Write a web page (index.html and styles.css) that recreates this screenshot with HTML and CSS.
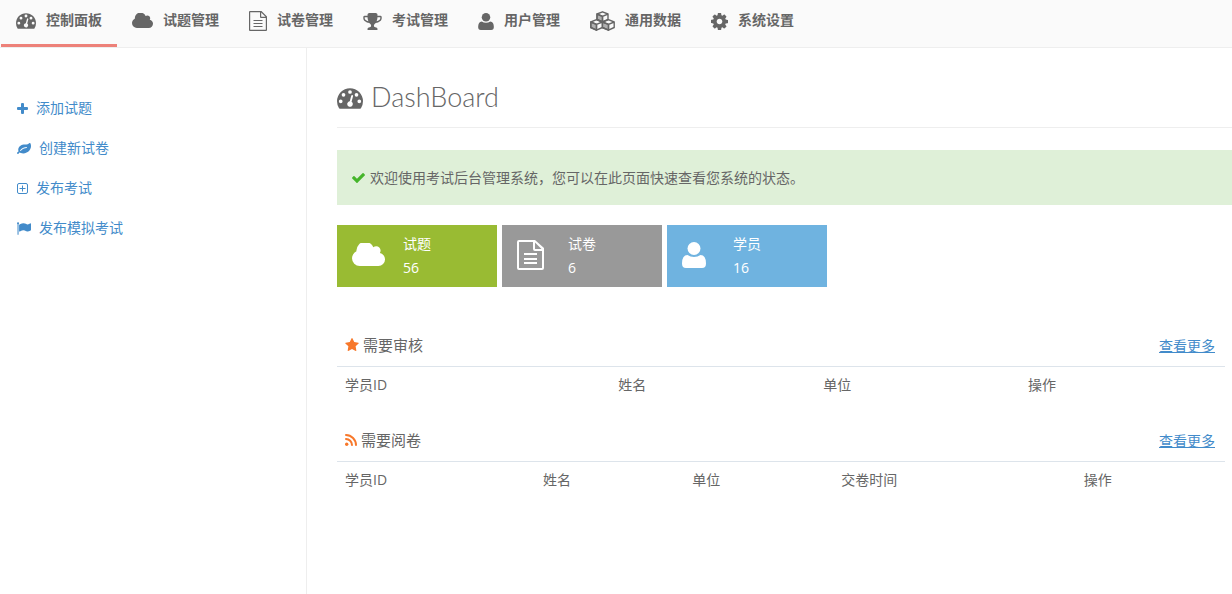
FILE: index.html
```html
<!DOCTYPE html>
<html lang="zh-CN">
<head>
<meta charset="utf-8">
<title>控制面板</title>
<link rel="stylesheet" href="styles.css">
</head>
<body>
<svg class="sprite" aria-hidden="true">
  <symbol id="dashboard" viewBox="0 256 1792 1408"><path fill-rule="evenodd" d="M1792 1152q0 261-141 483-19 29-54 29h-1402q-35 0-54-29-141-221-141-483 0-182 71-348t191-286 286-191 348-71 348 71 286 191 191 286 71 348zM384 1152a128 128 0 1 0-256 0 128 128 0 1 0 256 0zM576 704a128 128 0 1 0-256 0 128 128 0 1 0 256 0zM1024 512a128 128 0 1 0-256 0 128 128 0 1 0 256 0zM1472 704a128 128 0 1 0-256 0 128 128 0 1 0 256 0zM1664 1152a128 128 0 1 0-256 0 128 128 0 1 0 256 0zM1004 1185l101-382q6-26-7.500-48.500t-38.500-29.500-48 6.500-30 39.500l-101 382q-60 5-107 43.500t-63 98.500q-20 77 20 146t117 89 146-20 89-117q16-60-6-117t-72-91z"/></symbol>
  <symbol id="cloud" viewBox="64 256 1920 1280"><path d="M1984 1152q0 159-112.500 271.500t-271.500 112.500h-1088q-185 0-316.500-131.500t-131.500-316.500q0-132 71-241.500t187-163.500q-2-28-2-43 0-212 150-362t362-150q158 0 286.500 88t187.500 230q70-62 166-62 106 0 181 75t75 181q0 75-41 138 129 30 213.500 134.500t84.500 239.500z"/></symbol>
  <symbol id="file" viewBox="0 0 18 20"><path fill-rule="evenodd" d="M1 0H12.500L18 5.500V19a1 1 0 0 1-1 1H1a1 1 0 0 1-1-1V1a1 1 0 0 1 1-1zM1.200 1.200V18.800H16.800V7H12a1 1 0 0 1-1-1V1.200zM12.200 1.500V5.800H16.500zM4.500 9H13.500V10.100H4.500zM4.500 12H13.500V13.100H4.500zM4.500 15H13.500V16.100H4.500z"/></symbol>
  <symbol id="file-large" viewBox="0 0 27 30"><path fill-rule="evenodd" d="M2 0H18L27 8V28a2 2 0 0 1-2 2H2a2 2 0 0 1-2-2V2a2 2 0 0 1 2-2zM2 2V28H25V11H18a2 2 0 0 1-2-2V2zM18 2.500V9H24.500zM7 13H20V15H7zM7 18H20V20H7zM7 22H20V24H7z"/></symbol>
  <symbol id="trophy" viewBox="64 128 1664 1536"><path d="M522 883q-74-162-74-371h-256v96q0 78 94.500 162t235.500 113zm1078-275v-96h-256q0 209-74 371 141-29 235.500-113t94.500-162zm128-128v128q0 71-41.500 143t-112 130-173 97.500-215.500 44.500q-42 54-95 95-38 34-52.500 72.500t-14.500 89.500q0 54 30.500 91t97.500 37q75 0 133.500 45.500t58.500 114.500v64q0 14-9 23t-23 9h-832q-14 0-23-9t-9-23v-64q0-69 58.500-114.500t133.500-45.500q67 0 97.500-37t30.500-91q0-51-14.500-89.500t-52.500-72.500q-53-41-95-95-113-5-215.500-44.500t-173-97.500-112-130-41.500-143v-128q0-40 28-68t68-28h288v-96q0-66 47-113t113-47h576q66 0 113 47t47 113v96h288q40 0 68 28t28 68z"/></symbol>
  <symbol id="user" viewBox="0 0 24 26"><circle cx="12" cy="6.500" r="6.500"/><path d="M5.500 13Q8.300 15 12 15T18.500 13Q24 13.200 24 21.500 24 26 20 26H4Q0 26 0 21.500 0 13.200 5.500 13z"/></symbol>
  <symbol id="cubes" viewBox="0 0 25 20"><g stroke="currentColor" stroke-width="1.400" stroke-linejoin="round"><path fill="none" d="M7 3L12.500 .8 18 3V8.500L12.500 11 7 8.500zM7 3L12.500 5.300 18 3M12.500 5.300V11"/><path fill="none" d="M.8 11L6.500 8.700 12.400 11V16.500L6.500 19.200 .8 16.500zM.8 11L6.500 13.400 12.400 11M6.500 13.400V19.200"/><path fill="none" d="M12.400 11L18.500 8.700 24.200 11V16.500L18.500 19.200 12.400 16.500M12.400 11L18.500 13.400 24.200 11M18.500 13.400V19.200"/><path fill-opacity=".5" d="M7 3L12.500 5.300V11L7 8.500zM.8 11L6.500 13.400V19.200L.8 16.500zM12.400 11L18.500 13.400V19.200L12.400 16.500z"/></g></symbol>
  <symbol id="cog" viewBox="128 128 1536 1536"><path fill-rule="evenodd" d="M1152 896q0-106-75-181t-181-75-181 75-75 181 75 181 181 75 181-75 75-181zm512-109v222q0 12-8 23t-20 13l-185 28q-19 54-39 91 35 50 107 138 10 12 10 25t-9 23q-27 37-99 108t-94 71q-12 0-26-9l-138-108q-44 23-91 38-16 136-29 186-7 28-36 28h-222q-14 0-24.500-8.500t-11.500-21.500l-28-184q-49-16-90-37l-141 107q-10 9-25 9-14 0-25-11-126-114-165-168-7-10-7-23 0-12 8-23 15-21 51-66.500t54-70.500q-27-50-41-99l-183-27q-13-2-21-12.500t-8-23.500v-222q0-12 8-23t19-13l186-28q14-46 39-92-40-57-107-138-10-12-10-24 0-10 9-23 26-36 98.500-107.500t94.500-71.500q13 0 26 10l138 107q44-23 91-38 16-136 29-186 7-28 36-28h222q14 0 24.500 8.500t11.500 21.500l28 184q49 16 90 37l142-107q9-9 24-9 13 0 25 10 129 119 165 170 7 8 7 22 0 12-8 23-15 21-51 66.500t-54 70.500q26 50 41 98l183 28q13 2 21 12.500t8 23.500z"/></symbol>
  <symbol id="plus" viewBox="0 0 11 11"><path d="M5 0H6Q7 0 7 1V4H10Q11 4 11 5V6Q11 7 10 7H7V10Q7 11 6 11H5Q4 11 4 10V7H1Q0 7 0 6V5Q0 4 1 4H4V1Q4 0 5 0z"/></symbol>
  <symbol id="leaf" viewBox="0 128 1792 1408"><path fill-rule="evenodd" d="M1280 704q0-26-19-45t-45-19q-172 0-318 49.500t-259.500 134-235.500 219.500q-19 21-19 45 0 26 19 45t45 19q24 0 45-19 27-24 74-71t67-66q137-124 268.500-176t313.500-52q26 0 45-19t19-45zm512-198q0 95-20 193-46 224-184.500 383t-357.500 268q-214 108-438 108-148 0-286-47-15-5-88-42t-96-37q-16 0-39.500 32t-45 70-52.500 70-60 32q-43 0-63.500-17.500t-45.500-59.500q-2-4-6-11t-5.500-10-3-9.500-1.500-13.500q0-35 31-73.500t68-65.500 68-56 31-48q0-4-14-38t-16-44q-9-51-9-104 0-115 43.500-220t119-184.500 170.500-139 204-95.500q55-18 145-25.500t179.500-9 178.500-6 163.500-24 113.500-56.500l29.500-29.500t29.500-28 27-20 36.500-16 43.500-4.500q39 0 70.500 46t47.500 112 24 124 8 96z"/></symbol>
  <symbol id="plus-box" viewBox="0 0 11 11"><path fill="none" stroke="currentColor" d="M2 .5H9Q10.500 .5 10.500 2V9Q10.500 10.500 9 10.500H2Q.5 10.500 .5 9V2Q.5 .5 2 .5zM5.500 2.500V8.500M2.500 5.500H8.500"/></symbol>
  <symbol id="flag" viewBox="64 128 1728 1536"><path d="M320 256q0 72-64 110v1266q0 13-9.500 22.500t-22.500 9.500h-64q-13 0-22.500-9.500t-9.500-22.500v-1266q-64-38-64-110 0-53 37.500-90.500t90.500-37.500 90.500 37.500 37.500 90.500zm1472 64v763q0 25-12.500 38.500t-39.500 27.500q-215 116-369 116-61 0-123.500-22t-108.500-48-115.500-48-142.500-22q-192 0-464 146-17 9-33 9-26 0-45-19t-19-45v-742q0-32 31-55 21-14 79-43 236-120 421-120 107 0 200 29t219 88q38 19 88 19 54 0 117.500-21t110-47 88-47 54.500-21q26 0 45 19t19 45z"/></symbol>
  <symbol id="check" viewBox="120 330 1552 1192"><path d="M1671 566q0 40-28 68l-724 724-136 136q-28 28-68 28t-68-28l-136-136-362-362q-28-28-28-68t28-68l136-136q28-28 68-28t68 28l294 295 656-657q28-28 68-28t68 28l136 136q28 28 28 68z"/></symbol>
  <symbol id="star" viewBox="64 32 1664 1588"><path d="M1728 647q0 22-26 48l-363 354 86 500q1 7 1 20 0 21-10.500 35.500t-30.500 14.500q-19 0-40-12l-449-236-449 236q-22 12-40 12-21 0-31.500-14.500t-10.500-35.500q0-6 2-20l86-500-364-354q-25-27-25-48 0-37 56-46l502-73 225-455q19-41 49-41t49 41l225 455 502 73q56 9 56 46z"/></symbol>
  <symbol id="rss" viewBox="0 0 12 12"><circle cx="1.700" cy="10.300" r="1.700"/><path fill="none" stroke="currentColor" stroke-width="2" stroke-linecap="round" d="M1 5A6.200 6.200 0 0 1 7 11M1 1A10.200 10.200 0 0 1 11 11"/></symbol>
</svg>

<header class="topbar">
  <nav class="nav">
    <a class="nav-item active" href="#"><svg class="icon w20"><use href="#dashboard"/></svg>控制面板</a>
    <a class="nav-item" href="#"><svg class="icon w21"><use href="#cloud"/></svg>试题管理</a>
    <a class="nav-item" href="#"><svg class="icon w18"><use href="#file"/></svg>试卷管理</a>
    <a class="nav-item" href="#"><svg class="icon w19"><use href="#trophy"/></svg>考试管理</a>
    <a class="nav-item" href="#"><svg class="icon w16"><use href="#user"/></svg>用户管理</a>
    <a class="nav-item" href="#"><svg class="icon w25"><use href="#cubes"/></svg>通用数据</a>
    <a class="nav-item" href="#"><svg class="icon w17"><use href="#cog"/></svg>系统设置</a>
  </nav>
</header>

<div class="layout">
  <aside class="sidebar">
    <a class="side-link" href="#"><svg class="icon w11"><use href="#plus"/></svg>添加试题</a>
    <a class="side-link" href="#"><svg class="icon w14"><use href="#leaf"/></svg>创建新试卷</a>
    <a class="side-link" href="#"><svg class="icon w11"><use href="#plus-box"/></svg>发布考试</a>
    <a class="side-link" href="#"><svg class="icon w14"><use href="#flag"/></svg>发布模拟考试</a>
  </aside>

  <main class="main">
    <h1 class="title"><svg class="icon w26"><use href="#dashboard"/></svg>DashBoard</h1>

    <div class="alert"><svg class="icon w13"><use href="#check"/></svg>欢迎使用考试后台管理系统，您可以在此页面快速查看您系统的状态。</div>

    <div class="tiles">
      <div class="tile green"><span class="tile-icon"><svg class="icon w33"><use href="#cloud"/></svg></span><div><div>试题</div><div>56</div></div></div>
      <div class="tile gray"><span class="tile-icon"><svg class="icon w27"><use href="#file-large"/></svg></span><div><div>试卷</div><div>6</div></div></div>
      <div class="tile blue"><span class="tile-icon"><svg class="icon w24"><use href="#user"/></svg></span><div><div>学员</div><div>16</div></div></div>
    </div>

    <section class="panel">
      <div class="panel-head"><h2 class="panel-title"><svg class="icon w14 orange"><use href="#star"/></svg>需要审核</h2><a class="more" href="#">查看更多</a></div>
      <table class="grid">
        <colgroup><col class="four"><col class="three"><col class="three"><col></colgroup>
        <thead><tr><th>学员ID</th><th>姓名</th><th>单位</th><th>操作</th></tr></thead>
      </table>
    </section>

    <section class="panel">
      <div class="panel-head"><h2 class="panel-title"><svg class="icon w12 orange"><use href="#rss"/></svg>需要阅卷</h2><a class="more" href="#">查看更多</a></div>
      <table class="grid">
        <colgroup><col class="id"><col class="narrow"><col class="narrow"><col class="time"><col></colgroup>
        <thead><tr><th>学员ID</th><th>姓名</th><th>单位</th><th>交卷时间</th><th>操作</th></tr></thead>
      </table>
    </section>
  </main>
</div>
</body>
</html>
```
FILE: styles.css
```css
* { box-sizing: border-box; }

body {
  margin: 0;
  min-height: 100vh;
  display: flex;
  flex-direction: column;
  background: #fff;
  color: #666;
  font: 14px/20px "Open Sans", "Noto Sans CJK SC", sans-serif;
}

a { color: #428bca; text-decoration: none; }

.sprite { display: none; }

.icon { flex: none; fill: currentColor; }
.w11 { width: 11px; height: 11px; }
.w12 { width: 12px; height: 12px; }
.w13 { width: 13px; height: 10px; }
.w14 { width: 14px; height: 13px; }
.w16 { width: 16px; height: 17px; }
.w17 { width: 17px; height: 17px; }
.w18 { width: 18px; height: 20px; }
.w19 { width: 19px; height: 17px; }
.w20 { width: 20px; height: 16px; }
.w21 { width: 21px; height: 16px; }
.w24 { width: 24px; height: 26px; }
.w25 { width: 25px; height: 20px; }
.w26 { width: 26px; height: 21px; }
.w27 { width: 27px; height: 30px; }
.w33 { width: 33px; height: 24px; }
.orange { color: #f7782b; }

.topbar {
  background: #fafafa;
  border-bottom: 1px solid #eee;
}
.nav { display: flex; padding-left: 1px; }
.nav-item {
  display: flex;
  align-items: center;
  gap: 10px;
  height: 47px;
  padding: 0 15px 4px;
  border-bottom: 3px solid transparent;
  color: #666;
  font-weight: 700;
}
.nav-item.active { border-bottom-color: #ed8179; }
.nav-item .icon { margin-top: 2px; }

.layout { flex: 1; display: flex; }

.sidebar {
  flex: none;
  width: 307px;
  padding: 40px 17px;
  border-right: 1px solid #eee;
}
.side-link {
  display: flex;
  align-items: center;
  gap: 8px;
  height: 40px;
}

.main { flex: 1; padding: 29px 0 30px 30px; }

.title {
  display: flex;
  align-items: center;
  gap: 8px;
  margin: 0 0 22px;
  padding-bottom: 10px;
  border-bottom: 1px solid #eee;
  font-family: Lato, "Open Sans", sans-serif;
  font-size: 27px;
  line-height: 40px;
  font-weight: 300;
}
.title .icon { margin-top: 2px; }

.alert {
  display: flex;
  align-items: center;
  gap: 5px;
  min-height: 55px;
  padding: 15px;
  background: #dff0d8;
}
.alert .icon { color: #45b52a; }

.tiles { display: flex; gap: 5px; margin: 20px 0 36px; }
.tile {
  display: flex;
  align-items: center;
  width: 160px;
  height: 62px;
  padding-left: 15px;
  color: #fff;
  line-height: 24px;
}
.tile-icon { display: flex; width: 51px; padding-bottom: 2px; }
.green { background: #9b3; }
.gray { background: #999; }
.blue { background: #6fb3e0; }

.panel { margin: 0 7px 13px 0; }
.panel-head {
  display: flex;
  align-items: center;
  justify-content: space-between;
  height: 44px;
  padding: 0 10px 0 8px;
  border-bottom: 1px solid #dde4eb;
}
.panel-title {
  display: flex;
  align-items: center;
  gap: 4px;
  margin: 0;
  font-size: 15px;
  font-weight: 400;
}
.more { padding-top: 3px; text-decoration: underline; }

.grid { width: 100%; table-layout: fixed; border-collapse: collapse; }
.grid th { padding: 8px 8px 10px; text-align: left; font-weight: 400; }
.four { width: calc(100% * 4 / 13); }
.three { width: calc(100% * 3 / 13); }
.id { width: 22.3%; }
.narrow { width: 16.8%; }
.time { width: 27.3%; }
```
